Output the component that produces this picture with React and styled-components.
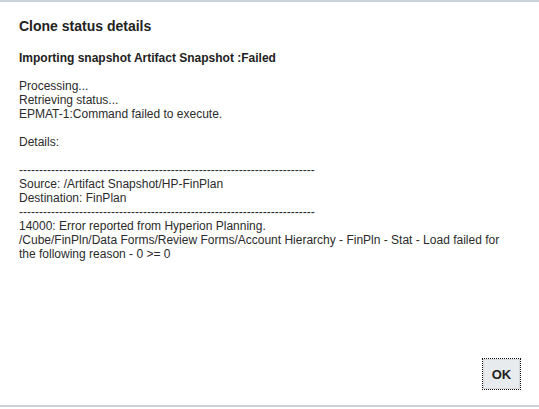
import React from 'react'
import styled, { createGlobalStyle } from 'styled-components'

const GlobalStyle = createGlobalStyle`
    html, body {
        margin: 0;
        padding: 0;
        background: #ffffff;
    }

    body {
        font-family: "Liberation Sans", Arial, sans-serif;
        color: #222222;
    }
`

const Dialog = styled.div`
    box-sizing: border-box;
    width: 539px;
    height: 407px;
    border-top: 2px solid #c9d2db;
    border-bottom: 2px solid #c9d2db;
    display: flex;
    flex-direction: column;
    background: #ffffff;
`

const Title = styled.h1`
    margin: 0;
    padding: 16px 19px 0;
    font-size: 14px;
    line-height: 16px;
    font-weight: bold;
    color: #222222;
`

const Body = styled.div`
    flex: 1;
    padding: 17px 22px 0 19px;
    font-size: 12px;
    line-height: 14px;
    color: #2b2b2b;
`

const Heading = styled.p`
    margin: 0 0 14px;
    font-weight: bold;
    color: #222222;
`

const Log = styled.pre`
    margin: 0;
    font-family: inherit;
    font-size: inherit;
    line-height: inherit;
    white-space: pre-wrap;
`

const Footer = styled.div`
    display: flex;
    justify-content: flex-end;
    padding: 0 19px 16px;
`

const Button = styled.button`
    box-sizing: border-box;
    width: 37px;
    height: 30px;
    padding: 0;
    font-family: "Liberation Sans", Arial, sans-serif;
    font-size: 13px;
    font-weight: bold;
    color: #1f1f1f;
    background: #e8ebee;
    border: 1px solid #d4d9de;
    outline: 1px dotted #111111;
    outline-offset: 0;
    cursor: pointer;
`

const rule = '-'.repeat(74)

const log = [
    'Processing...',
    'Retrieving status...',
    'EPMAT-1:Command failed to execute.',
    '',
    'Details:',
    '',
    rule,
    'Source: /Artifact Snapshot/HP-FinPlan',
    'Destination: FinPlan',
    rule,
    '14000: Error reported from Hyperion Planning.',
    '/Cube/FinPln/Data Forms/Review Forms/Account Hierarchy - FinPln - Stat - Load failed for the following reason - 0 >= 0',
].join('\n')

export default function App() {
    return (
        <>
            <GlobalStyle />
            <Dialog>
                <Title>Clone status details</Title>
                <Body>
                    <Heading>Importing snapshot Artifact Snapshot :Failed</Heading>
                    <Log>{log}</Log>
                </Body>
                <Footer>
                    <Button type="button">OK</Button>
                </Footer>
            </Dialog>
        </>
    )
}
